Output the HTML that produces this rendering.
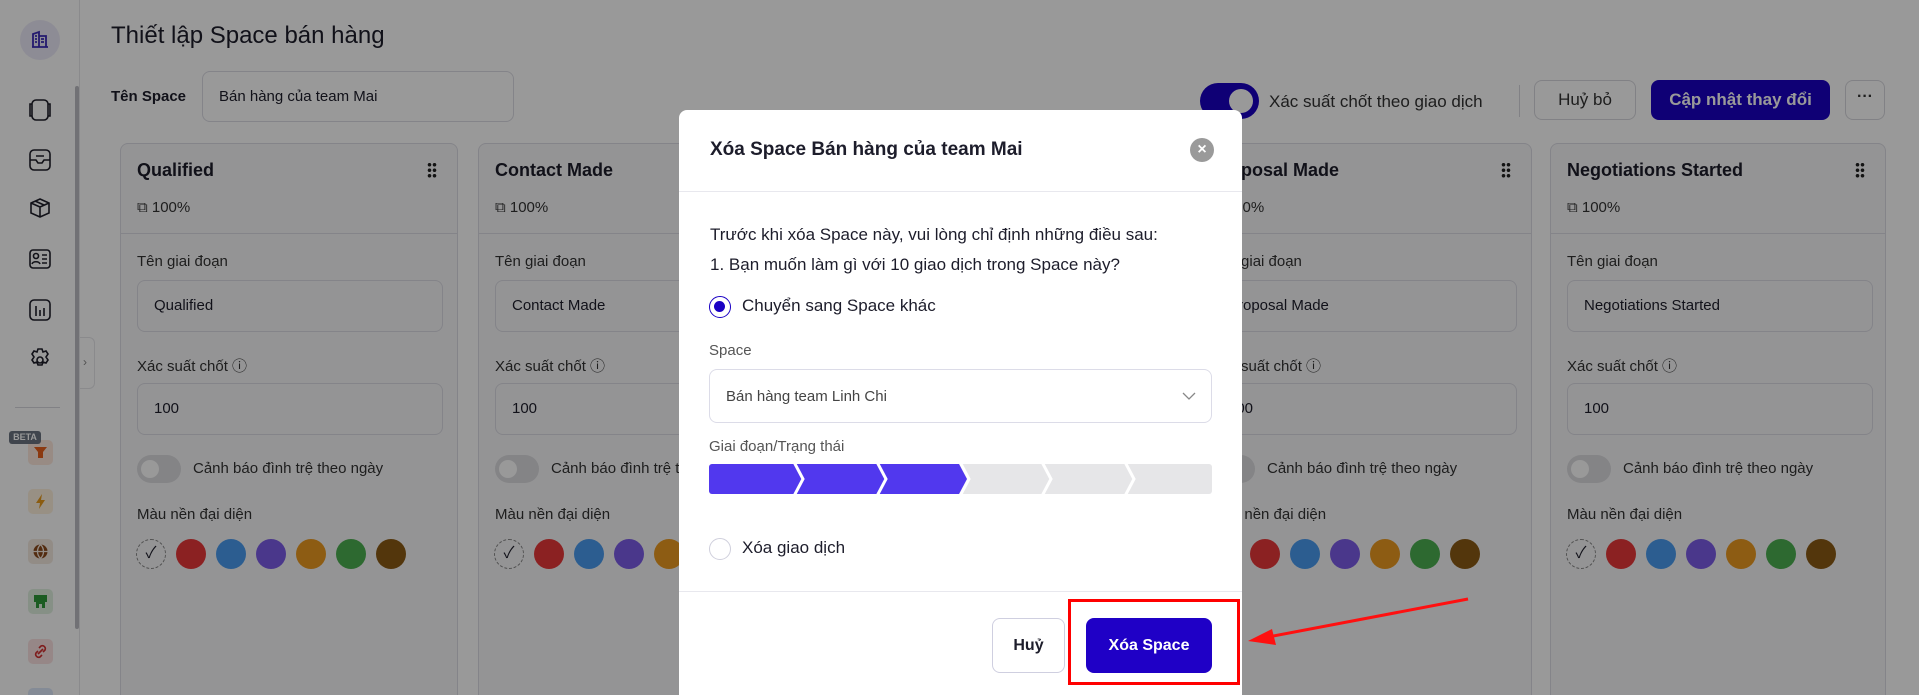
<!DOCTYPE html>
<html style="overflow:hidden;width:1919px;height:695px"><head><meta charset="utf-8"><style>
*{box-sizing:border-box;margin:0;padding:0}
body{width:1919px;height:695px;overflow:hidden;background:#fff;font-family:"Liberation Sans","Noto Sans CJK SC",sans-serif;color:#1d1d2b;position:relative}
.abs{position:absolute}
.side{left:0;top:0;width:80px;height:695px;border-right:1px solid #e6e6ea;background:#fff;overflow:hidden}
.ic{position:absolute;left:28px;width:25px;height:25px;border-radius:5px}
.card{position:absolute;top:143px;width:338px;height:560px;border:1px solid #dcdce4;border-radius:8px;background:#f7f7f9}
.card .t{position:absolute;left:16px;top:16px;font-size:18px;font-weight:bold}
.card .p{position:absolute;left:16px;top:55px;font-size:15px;color:#333}
.card .dv{position:absolute;left:0;right:0;top:89px;border-top:1px solid #dcdce4}
.card .l{position:absolute;left:16px;font-size:15px;color:#333}
.card .in{position:absolute;left:16px;width:306px;height:52px;border:1px solid #dcdce4;border-radius:8px;background:#f7f7f9;font-size:15px;padding:16px 0 0 16px}
.tg{position:absolute;left:16px;top:311px;width:44px;height:28px;border-radius:14px;background:#dcdce0}
.tg:after{content:"";position:absolute;left:4px;top:5px;width:18px;height:18px;border-radius:50%;background:#fff}
.dots{position:absolute;right:20px;top:18px;width:10px;height:16px;background:radial-gradient(circle,#222 1.6px,transparent 2px) 0 0/5px 5.5px}
.c{position:absolute;top:395px;width:30px;height:30px;border-radius:50%}
.ov{left:0;top:0;width:1919px;height:695px;background:rgba(0,0,0,.4)}
.modal{left:679px;top:110px;width:563px;height:585px;background:#fff;border-radius:8px 8px 0 0}
.btn{position:absolute;border-radius:8px;font-size:16px;font-weight:bold;text-align:center}
</style></head><body>
<div class="abs" style="left:0;top:0;width:1919px;height:695px;overflow:hidden">
<div class="abs side">
 <div class="abs" style="left:20px;top:20px;width:40px;height:40px;border-radius:50%;background:#eceaf8"></div>
 <svg class="abs" style="left:30px;top:30px" width="20" height="20" viewBox="0 0 20 20"><path d="M3 17V4l6-2v15M9 6h7v11M2 17h16M5 6h2M5 9h2M5 12h2M11 9h3M11 12h3" stroke="#3b2bb8" stroke-width="1.8" fill="none"/></svg>
 <svg class="abs" style="left:28px;top:98px" width="24" height="300" viewBox="0 0 24 300" fill="none" stroke="#1f1f2a" stroke-width="1.6">
  <rect x="4" y="2" width="16" height="20" rx="4"/><path d="M4 6H2v12h2M20 6h2v12h-2"/>
  <rect x="2" y="52" width="20" height="20" rx="4"/><path d="M2 62h6l2 3h4l2-3h6M8 58h8"/>
  <path d="M12 101l9 4v10l-9 4-9-4v-10zM3 105l9 4 9-4M12 109v10M7 103l9 4"/>
  <rect x="2" y="152" width="20" height="18" rx="3"/><circle cx="8" cy="158" r="2.5"/><path d="M4 166c1-3 7-3 8 0M14 157h5M14 161h5M14 165h5"/>
  <rect x="2" y="202" width="20" height="20" rx="4"/><path d="M8 208v10M12 212v6M16 210v8"/>
  <circle cx="12" cy="262" r="3"/><path d="M10 251h4l1 3 3-1 2 3-2 3 2 3-2 3-3-1-1 3h-4l-1-3-3 1-2-3 2-3-2-3 2-3 3 1z"/>
 </svg>
 <div class="abs" style="left:75px;top:86px;width:4px;height:543px;background:#bdbdc4;border-radius:2px"></div>
 <div class="abs" style="left:15px;top:407px;width:45px;border-top:1px solid #d8d8de"></div>
 <div class="ic" style="top:440px;background:#fde8dc"><svg width="25" height="25"><path d="M6 7h13l-4 5v6h-5v-6z" fill="#e8601c"/></svg></div>
 <div class="abs" style="left:9px;top:431px;width:32px;height:13px;background:#6b7480;border-radius:3px;color:#fff;font-size:9px;font-weight:bold;text-align:center;line-height:13px">BETA</div>
 <div class="ic" style="top:489px;background:#fdf0dc"><svg width="25" height="25"><path d="M14 5l-6 9h4l-1 6 6-9h-4z" fill="#e89a1c"/></svg></div>
 <div class="ic" style="top:539px;background:#f4e9e0"><svg width="25" height="25"><circle cx="12.5" cy="12.5" r="7" fill="#8b4a1c"/><path d="M5.5 12.5h14M12.5 5.5c-4 4-4 10 0 14c4-4 4-10 0-14" stroke="#f4e9e0" stroke-width="1.3" fill="none"/></svg></div>
 <div class="ic" style="top:589px;background:#dff1df"><svg width="25" height="25"><path d="M6 6h13v7h-2v6h-3v-4h-3v4H8v-6H6z" fill="#2e9a3a"/></svg></div>
 <div class="ic" style="top:639px;background:#fbe1e1"><svg width="25" height="25"><path d="M11 9l2-2a3 3 0 014 4l-2 2M14 16l-2 2a3 3 0 01-4-4l2-2M10 15l5-5" stroke="#d23030" stroke-width="1.6" fill="none"/></svg></div>
 <div class="ic" style="top:688px;background:#dde8fb"></div>
</div>
<div class="abs" style="left:80px;top:337px;width:15px;height:52px;background:#fff;border:1px solid #e6e6ea;border-left:0;border-radius:0 6px 6px 0;font-size:12px;color:#888;padding:17px 0 0 3px">›</div>
<div class="abs" style="left:111px;top:22px;font-size:24px">Thiết lập Space bán hàng</div>
<div class="abs" style="left:111px;top:88px;font-size:15px;font-weight:bold">Tên Space</div>
<div class="abs" style="left:202px;top:71px;width:312px;height:51px;border:1px solid #dcdce4;border-radius:8px;font-size:15px;padding:16px 0 0 16px">Bán hàng của team Mai</div>
<div class="abs" style="left:1200px;top:83px;width:59px;height:36px;border-radius:18px;background:#1a00c4"><div class="abs" style="left:29px;top:6px;width:24px;height:24px;border-radius:50%;background:#fff"></div></div>
<div class="abs" style="left:1269px;top:92px;font-size:17px;color:#333">Xác suất chốt theo giao dịch</div>
<div class="abs" style="left:1519px;top:85px;height:32px;border-left:1px solid #d8d8de"></div>
<div class="btn" style="left:1534px;top:80px;width:102px;height:40px;border:1px solid #d8d8de;font-weight:normal;font-size:17px;line-height:38px;color:#333">Huỷ bỏ</div>
<div class="btn" style="left:1651px;top:80px;width:179px;height:40px;background:#1a00c4;color:#fff;font-size:17px;line-height:40px">Cập nhật thay đổi</div>
<div class="btn" style="left:1845px;top:80px;width:40px;height:40px;border:1px solid #d8d8de;line-height:32px;color:#333">···</div>
<div class="card" style="left:120px"><div class="t">Qualified</div><div class="dots"></div><div class="p">⧉ 100%</div><div class="dv"></div>
<div class="l" style="top:109px">Tên giai đoạn</div><div class="in" style="top:136px">Qualified</div>
<div class="l" style="top:211px">Xác suất chốt ⓘ</div><div class="in" style="top:239px">100</div>
<div class="tg"></div><div class="l" style="left:72px;top:316px">Cảnh báo đình trệ theo ngày</div>
<div class="l" style="top:362px">Màu nền đại diện</div>
<div class="c" style="left:15px;border:1px dashed #888;font-size:16px;text-align:center;line-height:28px">✓</div><div class="c" style="left:55px;background:#e8383a"></div><div class="c" style="left:95px;background:#4a9cf0"></div><div class="c" style="left:135px;background:#7c5ce8"></div><div class="c" style="left:175px;background:#eb9a20"></div><div class="c" style="left:215px;background:#4caf50"></div><div class="c" style="left:255px;background:#8b5a14"></div></div>
<div class="card" style="left:478px"><div class="t">Contact Made</div><div class="dots"></div><div class="p">⧉ 100%</div><div class="dv"></div>
<div class="l" style="top:109px">Tên giai đoạn</div><div class="in" style="top:136px">Contact Made</div>
<div class="l" style="top:211px">Xác suất chốt ⓘ</div><div class="in" style="top:239px">100</div>
<div class="tg"></div><div class="l" style="left:72px;top:316px">Cảnh báo đình trệ theo ngày</div>
<div class="l" style="top:362px">Màu nền đại diện</div>
<div class="c" style="left:15px;border:1px dashed #888;font-size:16px;text-align:center;line-height:28px">✓</div><div class="c" style="left:55px;background:#e8383a"></div><div class="c" style="left:95px;background:#4a9cf0"></div><div class="c" style="left:135px;background:#7c5ce8"></div><div class="c" style="left:175px;background:#eb9a20"></div></div>
<div class="card" style="left:1194px"><div class="t">Proposal Made</div><div class="dots"></div><div class="p">⧉ 100%</div><div class="dv"></div>
<div class="l" style="top:109px">Tên giai đoạn</div><div class="in" style="top:136px">Proposal Made</div>
<div class="l" style="top:211px">Xác suất chốt ⓘ</div><div class="in" style="top:239px">100</div>
<div class="tg"></div><div class="l" style="left:72px;top:316px">Cảnh báo đình trệ theo ngày</div>
<div class="l" style="top:362px">Màu nền đại diện</div>
<div class="c" style="left:15px;border:1px dashed #888"></div><div class="c" style="left:55px;background:#e8383a"></div><div class="c" style="left:95px;background:#4a9cf0"></div><div class="c" style="left:135px;background:#7c5ce8"></div><div class="c" style="left:175px;background:#eb9a20"></div><div class="c" style="left:215px;background:#4caf50"></div><div class="c" style="left:255px;background:#8b5a14"></div></div>
<div class="card" style="left:1550px;width:336px"><div class="t">Negotiations Started</div><div class="dots"></div><div class="p">⧉ 100%</div><div class="dv"></div>
<div class="l" style="top:109px">Tên giai đoạn</div><div class="in" style="top:136px">Negotiations Started</div>
<div class="l" style="top:211px">Xác suất chốt ⓘ</div><div class="in" style="top:239px">100</div>
<div class="tg"></div><div class="l" style="left:72px;top:316px">Cảnh báo đình trệ theo ngày</div>
<div class="l" style="top:362px">Màu nền đại diện</div>
<div class="c" style="left:15px;border:1px dashed #888;font-size:16px;text-align:center;line-height:28px">✓</div><div class="c" style="left:55px;background:#e8383a"></div><div class="c" style="left:95px;background:#4a9cf0"></div><div class="c" style="left:135px;background:#7c5ce8"></div><div class="c" style="left:175px;background:#eb9a20"></div><div class="c" style="left:215px;background:#4caf50"></div><div class="c" style="left:255px;background:#8b5a14"></div></div>
<div class="abs ov"></div>
<div class="abs modal">
 <div class="abs" style="left:31px;top:29px;font-size:19px;font-weight:bold">Xóa Space Bán hàng của team Mai</div>
 <div class="abs" style="left:511px;top:28px;width:24px;height:24px;border-radius:50%;background:#9a9a9a;color:#fff;font-size:16px;font-weight:bold;text-align:center;line-height:24px">×</div>
 <div class="abs" style="left:0;right:0;top:81px;border-top:1px solid #e8e8ee"></div>
 <div class="abs" style="left:31px;top:110px;font-size:17px;line-height:30px">Trước khi xóa Space này, vui lòng chỉ định những điều sau:<br>1. Bạn muốn làm gì với 10 giao dịch trong Space này?</div>
 <div class="abs" style="left:30px;top:186px;width:22px;height:22px;border-radius:50%;border:1.5px solid #1a00c4"><div class="abs" style="left:4px;top:4px;width:11px;height:11px;border-radius:50%;background:#1a00c4"></div></div>
 <div class="abs" style="left:63px;top:186px;font-size:17px">Chuyển sang Space khác</div>
 <div class="abs" style="left:30px;top:232px;font-size:15px;color:#555">Space</div>
 <div class="abs" style="left:30px;top:259px;width:503px;height:54px;border:1px solid #dcdce8;border-radius:8px;font-size:15px;color:#444;padding:18px 0 0 16px">Bán hàng team Linh Chi
  <svg class="abs" style="right:15px;top:21px" width="14" height="10"><path d="M1 2l6 6 6-6" stroke="#888" stroke-width="1.3" fill="none"/></svg></div>
 <div class="abs" style="left:30px;top:328px;font-size:15px;color:#555">Giai đoạn/Trạng thái</div>
 <svg class="abs" style="left:30px;top:354px" width="503" height="30"><defs><clipPath id="r"><rect width="503" height="30" rx="3"/></clipPath></defs><g clip-path="url(#r)">
  <rect width="503" height="30" fill="#e6e6e8"/>
  <path d="M0 0h250l8 15-8 15H0z" fill="#5138ee"/>
  <path d="M85 -2l9 17-9 17M168 -2l9 17-9 17M251 -2l9 17-9 17M333 -2l9 17-9 17M416 -2l9 17-9 17" stroke="#fff" stroke-width="3" fill="none"/></g></svg>
 <div class="abs" style="left:30px;top:428px;width:22px;height:22px;border-radius:50%;border:1px solid #cfcfdc"></div>
 <div class="abs" style="left:63px;top:428px;font-size:17px">Xóa giao dịch</div>
 <div class="abs" style="left:0;right:0;top:481px;border-top:1px solid #e8e8ee"></div>
 <div class="btn" style="left:313px;top:508px;width:73px;height:55px;border:1px solid #cfcfe0;line-height:53px">Huỷ</div>
 <div class="btn" style="left:407px;top:508px;width:126px;height:55px;background:#1f00c6;color:#fff;line-height:55px">Xóa Space</div>
</div>
<div class="abs" style="left:1068px;top:599px;width:172px;height:86px;border:3px solid #ff0000"></div>
<svg class="abs" style="left:0;top:0" width="1919" height="695"><path d="M1468 599L1268 637" stroke="#ff1010" stroke-width="3"/><path d="M1248 641l24-12 4 16z" fill="#ff1010"/></svg>
</div>
</body></html>
